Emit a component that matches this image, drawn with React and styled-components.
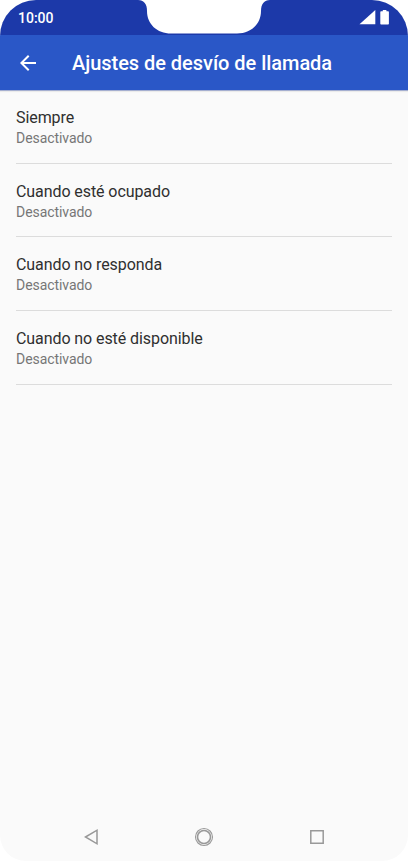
import React from 'react';
import styled, { createGlobalStyle } from 'styled-components';

const GlobalStyle = createGlobalStyle`
    * {
        box-sizing: border-box;
    }
    body {
        margin: 0;
        background: #fff;
        font-family: Roboto, 'Liberation Sans', sans-serif;
    }
`;

const Screen = styled.div`
    display: flex;
    flex-direction: column;
    width: 408px;
    height: 861px;
    overflow: hidden;
    background: #fafafa;
    border-radius: 36px 36px 26px 26px;
`;

const StatusBar = styled.div`
    display: flex;
    justify-content: space-between;
    height: 35px;
    padding: 0 18px;
    background: #1c39a9;
`;

const Time = styled.span`
    font-size: 14px;
    font-weight: 500;
    line-height: 36px;
    width: 120px;
    color: #fff;
`;

const Notch = styled.svg`
    display: block;
    width: 132px;
    height: 34px;
    flex: none;
`;

const StatusIcons = styled.div`
    display: flex;
    justify-content: flex-end;
    width: 120px;
    padding-top: 10px;
`;

const AppBar = styled.header`
    display: flex;
    align-items: center;
    height: 55px;
    padding: 0 16px;
    background: #2a57c7;
    box-shadow: 0 1px 0 #a5afd0, 0 2px 1px rgba(0, 0, 0, 0.06);
`;

const BackButton = styled.button`
    display: flex;
    width: 24px;
    height: 24px;
    margin-right: 32px;
    padding: 0;
    border: 0;
    background: none;
    color: #fff;
`;

const Title = styled.h1`
    margin: 0;
    font-size: 20px;
    font-weight: 500;
    line-height: 24px;
    letter-spacing: -0.04px;
    white-space: nowrap;
    color: #fff;
`;

const List = styled.ul`
    flex: 1;
    margin: 0;
    padding: 0 16px;
    list-style: none;
`;

const Item = styled.li`
    height: 73.67px;
    padding-top: 18px;
    border-bottom: 1px solid #dcdcdc;
`;

const Label = styled.div`
    font-size: 16px;
    line-height: 20px;
    letter-spacing: -0.08px;
    color: #2f2f2f;
`;

const Status = styled.div`
    font-size: 14px;
    line-height: 20px;
    letter-spacing: -0.06px;
    color: #767676;
`;

const NavBar = styled.nav`
    display: flex;
    justify-content: space-between;
    align-items: center;
    height: 48px;
    padding: 0 79px;
`;

const NavIcon = styled.svg`
    display: block;
    width: 24px;
    height: 24px;
    fill: none;
    stroke: #999;
    stroke-width: 1.5;
`;

const options = [
    'Siempre',
    'Cuando esté ocupado',
    'Cuando no responda',
    'Cuando no esté disponible',
];

const App = () => {
    return (
        <>
            <GlobalStyle />
            <Screen>
                <StatusBar>
                    <Time>10:00</Time>
                    <Notch viewBox='0 0 132 34'>
                        <path
                            d='M0 0C6 0 9 4 9 11C9 24 19 33.5 33 33.5H99C113 33.5 123 24 123 11C123 4 126 0 132 0Z'
                            fill='#fff'
                        />
                    </Notch>
                    <StatusIcons>
                        <svg width='32' height='16' viewBox='0 0 32 16' fill='#fff'>
                            <path d='M1.500 14.300L17.300 0V14.300Z' />
                            <path d='M24.800 0h3.6v1.300h1.700q.8 0 .8.8v11.7q0 .8-.8.8h-7q-.8 0-.8-.8V2.100q0-.8.8-.8h1.700z' />
                        </svg>
                    </StatusIcons>
                </StatusBar>
                <AppBar>
                    <BackButton aria-label='Atrás'>
                        <svg width='24' height='24' viewBox='0 0 24 24' fill='currentColor'>
                            <path d='M20 11H7.830l5.590-5.590L12 4l-8 8 8 8 1.410-1.410L7.830 13H20z' />
                        </svg>
                    </BackButton>
                    <Title>Ajustes de desvío de llamada</Title>
                </AppBar>
                <List>
                    {options.map((label) => (
                        <Item key={label}>
                            <Label>{label}</Label>
                            <Status>Desactivado</Status>
                        </Item>
                    ))}
                </List>
                <NavBar>
                    <NavIcon viewBox='0 0 24 24'>
                        <path d='M6.500 12L18 5.200V18.800Z' />
                    </NavIcon>
                    <NavIcon viewBox='0 0 24 24'>
                        <circle cx='12' cy='12' r='8.500' strokeWidth='1.1' />
                        <circle cx='12' cy='12' r='6.500' strokeWidth='1.6' />
                    </NavIcon>
                    <NavIcon viewBox='0 0 24 24'>
                        <path d='M5.800 5.800H18.200V18.200H5.800Z' />
                    </NavIcon>
                </NavBar>
            </Screen>
        </>
    );
};

export default App;
